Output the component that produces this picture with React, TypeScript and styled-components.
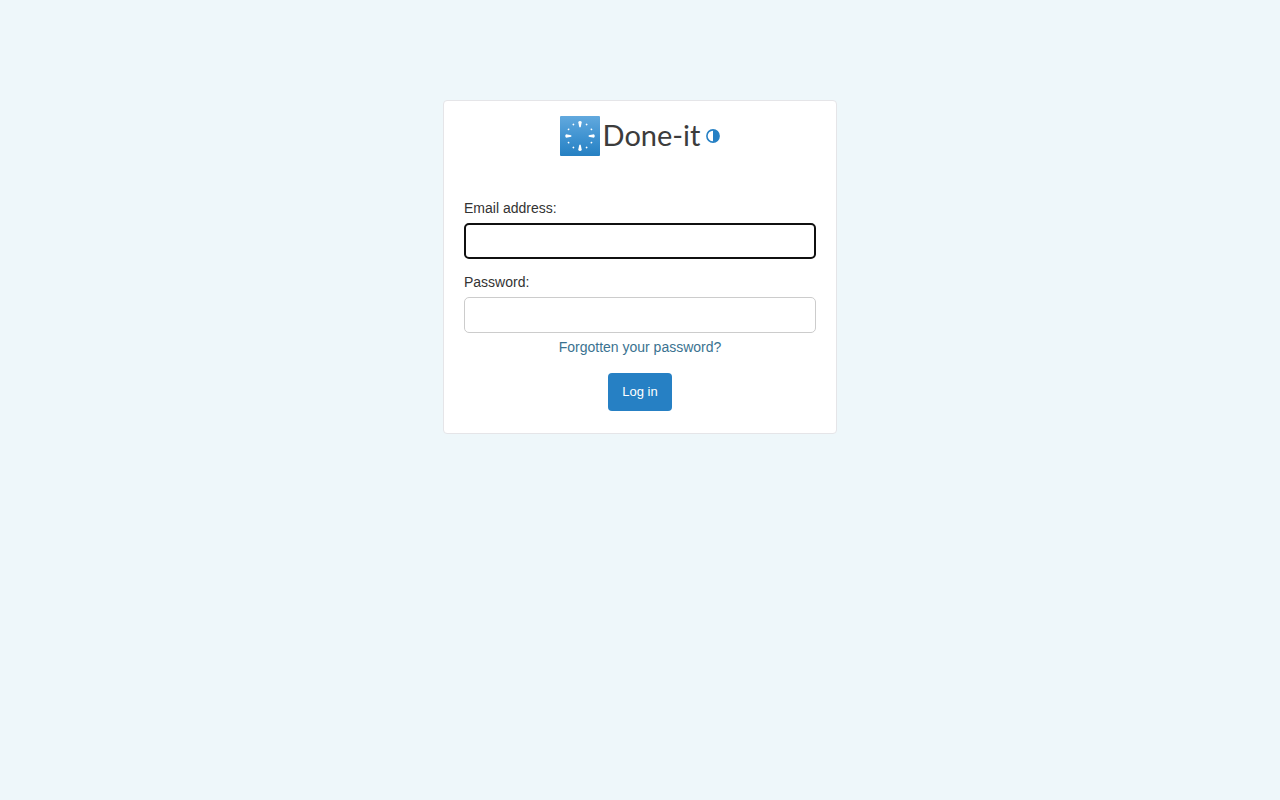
import React from 'react';
import styled, { createGlobalStyle } from 'styled-components';

const GlobalStyle = createGlobalStyle`
  * { box-sizing: border-box; }
  body {
    margin: 0;
    background: #eef7fa;
    color: #333;
    font-family: "Liberation Sans", Arial, sans-serif;
    font-size: 14px;
    line-height: 20px;
  }
`;

const Page = styled.main`
  display: flex;
  justify-content: center;
  padding: 100px 16px 32px;
`;

const Card = styled.form`
  width: 100%;
  max-width: 394px;
  padding: 15px 20px 22px;
  display: flex;
  flex-direction: column;
  align-items: center;
  background: #fff;
  border: 1px solid #e5e5e8;
  border-radius: 4px;
`;

const Brand = styled.div`
  display: flex;
  align-items: center;
  height: 40px;
  margin-bottom: 42px;
`;

const LogoMark = styled.svg`
  display: block;
  width: 40px;
  height: 40px;
`;

const BrandName = styled.h1`
  margin: 0 6px 0 3px;
  padding-bottom: 2px;
  color: #3c3c3c;
  font-family: Lato, sans-serif;
  font-size: 29px;
  font-weight: 400;
  line-height: 38px;
`;

const ContrastButton = styled.button`
  display: block;
  padding: 0;
  border: 0;
  background: none;
  cursor: pointer;

  svg {
    display: block;
    width: 14px;
    height: 14px;
  }
`;

const Field = styled.div`
  display: flex;
  flex-direction: column;
  gap: 5px;
  width: 100%;

  & + & {
    margin-top: 13px;
  }
`;

const Label = styled.label`
  line-height: 20px;
`;

const Input = styled.input`
  width: 100%;
  height: 36px;
  padding: 6px 12px;
  border: 1px solid #ccc;
  border-radius: 5px;
  background: #fff;
  color: #333;
  font: inherit;
  caret-color: transparent;

  &:focus {
    outline: none;
    border: 2px solid #101010;
  }
`;

const ForgottenLink = styled.a`
  margin: 4px 0 16px;
  color: #3a7290;
  text-decoration: none;
`;

const LoginButton = styled.button`
  height: 38px;
  padding: 0 14px 2px;
  border: 0;
  border-radius: 4px;
  background: #2680c4;
  color: #fff;
  font-family: inherit;
  font-size: 13px;
  cursor: pointer;
`;

function ClockLogo() {
  const minor = [30, 60, 120, 150, 210, 240, 300, 330];
  const major = [0, 90, 180, 270];
  return (
    <LogoMark viewBox="0 0 40 40" aria-hidden="true">
      <defs>
        <linearGradient id="mark" x1="0" y1="0" x2="0" y2="1">
          <stop offset="0" stopColor="#62a9de" />
          <stop offset="0.6" stopColor="#3b90cf" />
          <stop offset="1" stopColor="#2680c2" />
        </linearGradient>
      </defs>
      <rect width="40" height="40" rx="1" fill="url(#mark)" />
      {major.map((angle) => (
        <path
          key={angle}
          d="M18.2 6Q20 4.2 21.8 6L20.7 11.3H19.3Z"
          fill="#fff"
          transform={`rotate(${angle} 20 20)`}
        />
      ))}
      {minor.map((angle) => (
        <circle key={angle} cx="20" cy="6.8" r="0.9" fill="#fff" transform={`rotate(${angle} 20 20)`} />
      ))}
    </LogoMark>
  );
}

export default function App() {
  return (
    <>
      <GlobalStyle />
      <Page>
        <Card onSubmit={(event) => event.preventDefault()}>
          <Brand>
            <ClockLogo />
            <BrandName>Done-it</BrandName>
            <ContrastButton type="button" aria-label="Toggle contrast">
              <svg viewBox="0 0 14 14" aria-hidden="true">
                <circle cx="7" cy="7" r="6.1" fill="#fff" stroke="#2680c4" strokeWidth="1.6" />
                <path d="M7 1a6 6 0 0 1 0 12Z" fill="#2680c4" />
              </svg>
            </ContrastButton>
          </Brand>
          <Field>
            <Label htmlFor="email">Email address:</Label>
            <Input id="email" type="email" autoFocus />
          </Field>
          <Field>
            <Label htmlFor="password">Password:</Label>
            <Input id="password" type="password" />
          </Field>
          <ForgottenLink href="#forgotten">Forgotten your password?</ForgottenLink>
          <LoginButton type="submit">Log in</LoginButton>
        </Card>
      </Page>
    </>
  );
}
